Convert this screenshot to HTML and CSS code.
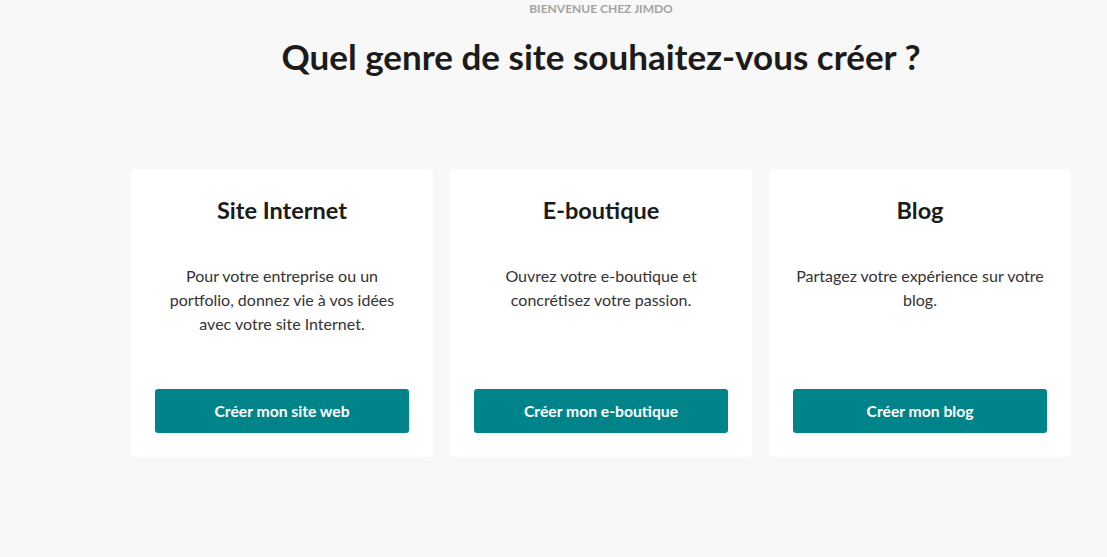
FILE: index.html
```html
<!DOCTYPE html>
<html lang="fr">
<head>
  <meta charset="UTF-8" />
  <meta name="viewport" content="width=device-width, initial-scale=1.0"/>
  <title>Jimdo</title>
  <link rel="stylesheet" href="styles.css">
</head>
<body>

<div class="page">
  <p class="welcome">BIENVENUE CHEZ JIMDO</p>
  <h1 class="title">Quel genre de site souhaitez-vous créer ?</h1>

  <!-- choix -->
  <div class="cards">
    <div class="card">
      <h2>Site Internet</h2>
      <p>Pour votre entreprise ou un portfolio, donnez vie à vos idées avec votre site Internet.</p>
      <a class="btn" href="#">Créer mon site web</a>
    </div>
    <div class="card">
      <h2>E-boutique</h2>
      <p>Ouvrez votre e-boutique et concrétisez votre passion.</p>
      <a class="btn" href="#">Créer mon e-boutique</a>
    </div>
    <div class="card">
      <h2>Blog</h2>
      <p>Partagez votre expérience sur votre blog.</p>
      <a class="btn" href="#">Créer mon blog</a>
    </div>
  </div>
</div>

</body>
</html>
```

FILE: styles.css
```css
* {
    margin: 0;
    padding: 0;
    box-sizing: border-box;
    font-family: Lato, Arial, Helvetica, sans-serif;
}

body {
    background-color: #f8f8f8;
    min-height: 100vh;
}

.page {
    width: 940px;
    margin-left: 131px;
    display: flex;
    flex-direction: column;
    align-items: center;
}

.welcome {
    font-size: 12px;
    font-weight: 700;
    color: #a3a3a3;
    line-height: 16px;
    margin-top: 1px;
}

.title {
    font-size: 35px;
    font-weight: 700;
    color: #1b1b1b;
    line-height: 40px;
    margin-top: 19px;
}

.cards {
    width: 100%;
    display: grid;
    grid-template-columns: repeat(3, 1fr);
    gap: 17px;
    margin-top: 93px;
}

.card {
    background-color: #fff;
    border-radius: 4px;
    height: 288px;
    padding: 27px 24px 24px;
    display: flex;
    flex-direction: column;
    align-items: center;
    text-align: center;
}

.card h2 {
    font-size: 23.5px;
    font-weight: 700;
    color: #1b1b1b;
    line-height: 28px;
}

.card p {
    font-size: 16px;
    line-height: 24px;
    color: #333;
    margin-top: 40px;
    padding: 0 2px;
    flex: 1;
}

.btn {
    width: 100%;
    height: 44px;
    border-radius: 3px;
    background-color: #008489;
    color: #fff;
    font-size: 15.7px;
    font-weight: 700;
    text-decoration: none;
    display: flex;
    align-items: center;
    justify-content: center;
}
```
